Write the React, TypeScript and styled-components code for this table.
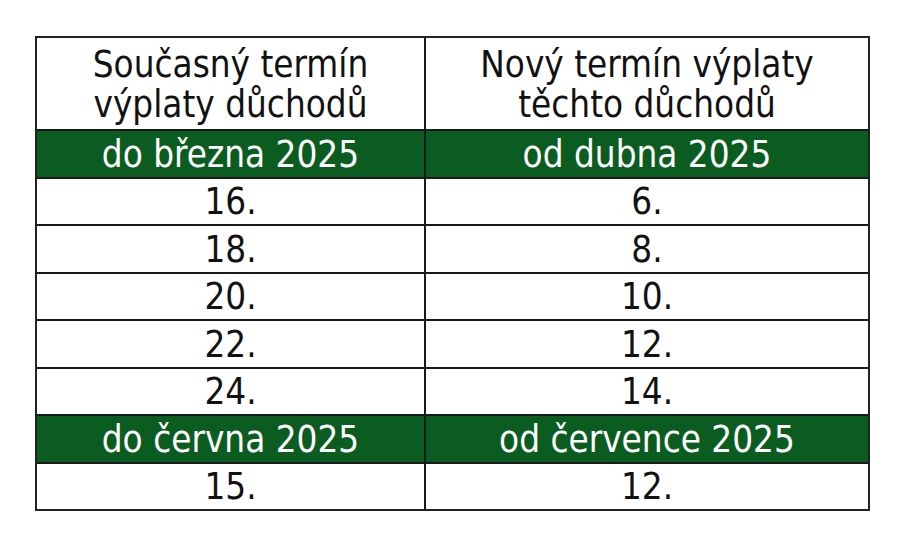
import React from "react";
import styled, { createGlobalStyle } from "styled-components";

const Global = createGlobalStyle`
  html, body { margin: 0; padding: 0; background: #ffffff; }
  body { width: 900px; height: 537px; overflow: hidden; }
`;

const Page = styled.div`
  width: 900px;
  height: 537px;
  box-sizing: border-box;
  padding: 36px 0 0 35px;
  background: #fff;
`;

const Table = styled.div`
  display: grid;
  grid-template-columns: 389px 442px;
  grid-template-rows: 93px repeat(7, 47.5px) 45.5px;
  width: 835px;
  box-sizing: border-box;
  border: 2px solid #222;
  font-family: "DejaVu Sans Condensed", "DejaVu Sans", Tahoma, sans-serif;
  color: #111;
`;

const Cell = styled.div<{ $green?: boolean; $right?: boolean; $last?: boolean }>`
  display: flex;
  align-items: center;
  justify-content: center;
  text-align: center;
  box-sizing: border-box;
  border-right: ${(p) => (p.$right ? "none" : "2px solid #1a1a1a")};
  border-bottom: ${(p) => (p.$last ? "none" : "2px solid #1a1a1a")};
  background: ${(p) => (p.$green ? "#0b5c20" : "#fff")};
  color: ${(p) => (p.$green ? "#ffffff" : "#111")};
  font-size: 36.5px;
  line-height: 40px;
  padding-top: 2px;
  white-space: nowrap;
`;

const rows: { l: string; r: string; g?: boolean }[] = [
  { l: "do března 2025", r: "od dubna 2025", g: true },
  { l: "16.", r: "6." },
  { l: "18.", r: "8." },
  { l: "20.", r: "10." },
  { l: "22.", r: "12." },
  { l: "24.", r: "14." },
  { l: "do června 2025", r: "od července 2025", g: true },
  { l: "15.", r: "12." },
];

export default function App() {
  return (
    <Page>
      <Global />
      <Table>
        <Cell>
          Současný termín
          <br />
          výplaty důchodů
        </Cell>
        <Cell $right>
          Nový termín výplaty
          <br />
          těchto důchodů
        </Cell>
        {rows.map((r, i) => (
          <React.Fragment key={i}>
            <Cell $green={r.g} $last={i === rows.length - 1}>
              {r.l}
            </Cell>
            <Cell $green={r.g} $right $last={i === rows.length - 1}>
              {r.r}
            </Cell>
          </React.Fragment>
        ))}
      </Table>
    </Page>
  );
}
